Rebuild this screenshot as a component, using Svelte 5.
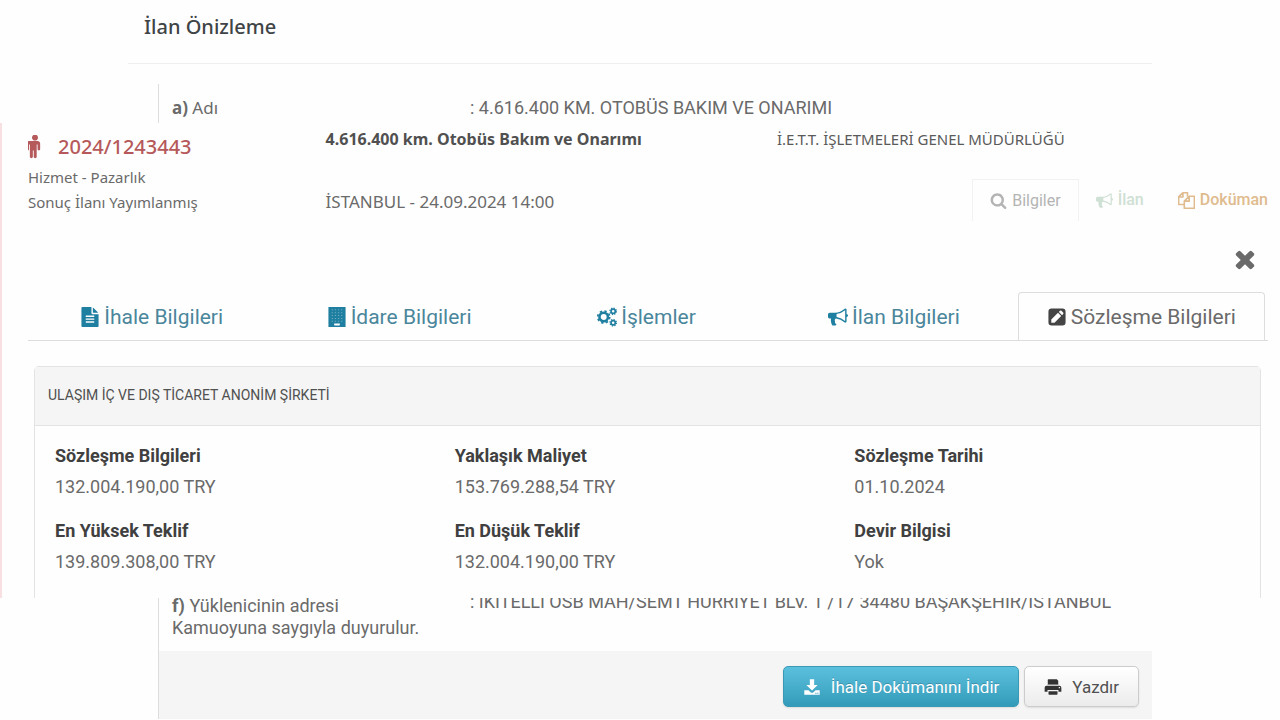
<script lang="ts">
	type IconName =
		| 'male' | 'search' | 'bullhorn' | 'copy' | 'close' | 'file'
		| 'building' | 'cogs' | 'edit' | 'download' | 'print';

	const tabs: { label: string; icon: IconName }[] = [
		{ label: 'İhale Bilgileri', icon: 'file' },
		{ label: 'İdare Bilgileri', icon: 'building' },
		{ label: 'İşlemler', icon: 'cogs' },
		{ label: 'İlan Bilgileri', icon: 'bullhorn' },
		{ label: 'Sözleşme Bilgileri', icon: 'edit' }
	];

	const contract = [
		{ label: 'Sözleşme Bilgileri', value: '132.004.190,00 TRY' },
		{ label: 'Yaklaşık Maliyet', value: '153.769.288,54 TRY' },
		{ label: 'Sözleşme Tarihi', value: '01.10.2024' },
		{ label: 'En Yüksek Teklif', value: '139.809.308,00 TRY' },
		{ label: 'En Düşük Teklif', value: '132.004.190,00 TRY' },
		{ label: 'Devir Bilgisi', value: 'Yok' }
	];

	let activeTab = $state(4);
</script>

{#snippet icon(name: IconName)}
	<svg
		class="icon icon-{name}"
		viewBox={name === 'male' ? '384 0 1024 1792' : '0 0 1792 1792'}
		fill="currentColor"
		aria-hidden="true"
	>
		{#if name === 'male'}
			<path d="M1280 640v416q0 40-28 68t-68 28-68-28-28-68v-352h-64v912q0 46-33 79t-79 33-79-33-33-79v-464h-64v464q0 46-33 79t-79 33-79-33-33-79v-912h-64v352q0 40-28 68t-68 28-68-28-28-68v-416q0-80 56-136t136-56h640q80 0 136 56t56 136zm-160-448q0 93-65.5 158.5t-158.5 65.5-158.5-65.5-65.5-158.5 65.5-158.5 158.5-65.5 158.5 65.5 65.5 158.5z" />
		{:else if name === 'search'}
			<path d="M1216 832q0-185-131.5-316.5t-316.5-131.5-316.5 131.5-131.5 316.5 131.5 316.5 316.5 131.5 316.5-131.5 131.5-316.5zm512 832q0 52-38 90t-90 38q-54 0-90-38l-343-342q-179 124-399 124-143 0-273.5-55.5t-225-150-150-225-55.5-273.5 55.5-273.5 150-225 225-150 273.5-55.5 273.5 55.5 225 150 150 225 55.5 273.5q0 220-124 399l343 343q37 37 37 90z" />
		{:else if name === 'bullhorn'}
			<path d="M1664 640q53 0 90.5 37.5t37.5 90.5-37.5 90.5-90.5 37.5v384q0 52-38 90t-90 38q-417-347-812-380-58 19-91 66t-31 100.5 40 92.5q-20 33-23 65.5t6 58 33.5 55 48 50 61.5 50.5q-29 58-111.5 83t-168.5 11.5-132-55.5q-7-23-29.5-87.5t-32-94.5-23-89-15-101 3.5-98.5 22-110.5h-122q-66 0-113-47t-47-113v-192q0-66 47-113t113-47h480q435 0 896-384 52 0 90 38t38 90v384zm-128 604v-954q-394 302-768 343v270q377 42 768 341z" />
		{:else if name === 'copy'}
			<path d="M520 64h480v420M520 64 64 520v800h600M520 64v456H64M1180 448h548v1280H664V964zM1180 448v516H664" fill="none" stroke="currentColor" stroke-width="170" stroke-linejoin="round" />
		{:else if name === 'close'}
			<path d="M1490 1322q0 40-28 68l-136 136q-28 28-68 28t-68-28l-294-294-294 294q-28 28-68 28t-68-28l-136-136q-28-28-28-68t28-68l294-294-294-294q-28-28-28-68t28-68l136-136q28-28 68-28t68 28l294 294 294-294q28-28 68-28t68 28l136 136q28 28 28 68t-28 68l-294 294 294 294q28 28 28 68z" />
		{:else if name === 'file'}
			<path d="M1596 476q14 14 28 36h-472v-472q22 14 36 28zm-476 164h544v1056q0 40-28 68t-68 28h-1344q-40 0-68-28t-28-68v-1600q0-40 28-68t68-28h800v544q0 40 28 68t68 28zm160 736v-64q0-14-9-23t-23-9h-704q-14 0-23 9t-9 23v64q0 14 9 23t23 9h704q14 0 23-9t9-23zm0-256v-64q0-14-9-23t-23-9h-704q-14 0-23 9t-9 23v64q0 14 9 23t23 9h704q14 0 23-9t9-23zm0-256v-64q0-14-9-23t-23-9h-704q-14 0-23 9t-9 23v64q0 14 9 23t23 9h704q14 0 23-9t9-23z" />
		{:else if name === 'building'}
			<path fill-rule="evenodd" d="M128 0h1536v1792H128zM640 1472v128q0 64 64 64h384q64 0 64-64v-128z" />
			<path d="M420 256h952M420 512h952M420 768h952M420 1024h952M420 1280h952" fill="none" stroke="#fff" stroke-opacity="0.35" stroke-width="90" stroke-dasharray="110 170" />
		{:else if name === 'cogs'}
			<g fill="none" stroke="currentColor">
				<circle cx="600" cy="896" r="380" stroke-width="230" />
				<circle cx="600" cy="896" r="540" stroke-width="150" stroke-dasharray="212 212" />
				<circle cx="1450" cy="384" r="190" stroke-width="150" />
				<circle cx="1450" cy="384" r="290" stroke-width="110" stroke-dasharray="114 114" />
				<circle cx="1450" cy="1408" r="190" stroke-width="150" />
				<circle cx="1450" cy="1408" r="290" stroke-width="110" stroke-dasharray="114 114" />
			</g>
		{:else if name === 'edit'}
			<path fill-rule="evenodd" d="M416 128h960q288 0 288 288v960q0 288-288 288H416q-288 0-288-288V416q0-288 288-288zM384 1408h288l600-600-288-288-600 600zM1062 442l288 288 96-96q68-68 0-136l-152-152q-68-68-136 0z" />
		{:else if name === 'download'}
			<path d="M680 128h432v560h350L896 1254 330 688h350z" />
			<path fill-rule="evenodd" d="M128 1216h420l200 200q148 120 296 0l200-200h420v448H128zM1216 1472h128v96h-128zm192 0h128v96h-128z" />
		{:else}
			<path d="M448 128h820l148 148v440H376V200q0-72 72-72z" />
			<path fill-rule="evenodd" d="M256 768h1280q192 0 192 192v416h-288v-192H352v192H64V960q0-192 192-192zM1472 896h128v128h-128z" />
			<path d="M448 1312h896v288q0 64-64 64H512q-64 0-64-64z" />
			<path d="M376 660h1040v80H376z" fill="#fff" />
		{/if}
	</svg>
{/snippet}

<main class="page">
	<section class="notice">
		<h1 class="notice-title">İlan Önizleme</h1>
		<div class="notice-body notice-top">
			<div class="notice-row">
				<span class="segoe"><b>a)</b> Adı</span>
				<span class="value">: 4.616.400 KM. OTOBÜS BAKIM VE ONARIMI</span>
			</div>
		</div>
	</section>

	<section class="tender">
		<div class="summary">
			<div class="summary-id">
				<div class="tender-no">{@render icon('male')}<span>2024/1243443</span></div>
				<div>Hizmet - Pazarlık</div>
				<div>Sonuç İlanı Yayımlanmış</div>
			</div>
			<div class="summary-job">
				<strong>4.616.400 km. Otobüs Bakım ve Onarımı</strong>
				<span class="place">İSTANBUL - 24.09.2024 14:00</span>
			</div>
			<div class="summary-authority">
				<span class="authority">İ.E.T.T. İŞLETMELERİ GENEL MÜDÜRLÜĞÜ</span>
				<div class="actions">
					<button class="action action-info">{@render icon('search')}Bilgiler</button>
					<button class="action action-notice">{@render icon('bullhorn')}İlan</button>
					<button class="action action-doc">{@render icon('copy')}Doküman</button>
				</div>
			</div>
		</div>

		<div class="close-row">
			<button class="close" aria-label="Kapat">{@render icon('close')}</button>
		</div>

		<nav class="tabs">
			{#each tabs as tab, i}
				<button class="tab" class:active={activeTab === i} onclick={() => (activeTab = i)}>
					{@render icon(tab.icon)}{tab.label}
				</button>
			{/each}
		</nav>

		<div class="panel">
			<h2 class="panel-head">ULAŞIM İÇ VE DIŞ TİCARET ANONİM ŞİRKETİ</h2>
			<dl class="panel-body">
				{#each contract as item}
					<div>
						<dt>{item.label}</dt>
						<dd>{item.value}</dd>
					</div>
				{/each}
			</dl>
		</div>
	</section>

	<section class="notice">
		<div class="notice-body">
			<!-- this row runs on underneath the tender panel -->
			<div class="notice-row tucked">
				<span><b>f)</b> Yüklenicinin adresi</span>
				<span class="value">: İKİTELLİ OSB MAH/SEMT HÜRRİYET BLV. 1 /17 34480 BAŞAKŞEHİR/İSTANBUL</span>
			</div>
			<p class="closing">Kamuoyuna saygıyla duyurulur.</p>
			<footer class="notice-footer">
				<button class="btn btn-primary">{@render icon('download')}İhale Dokümanını İndir</button>
				<button class="btn">{@render icon('print')}Yazdır</button>
			</footer>
		</div>
	</section>
</main>

<style>
:global(body) { background: #fefefe; }

.page {
	font-family: Roboto, "Liberation Sans", sans-serif;
	font-size: 17px;
	line-height: 22px;
	color: #6a6a6a;
	overflow: hidden;
}

button {
	font: inherit;
	color: inherit;
	background: none;
	border: 0;
	padding: 0;
	cursor: pointer;
}

.icon { width: 20px; height: 20px; flex-shrink: 0; }

/* Announcement preview */
.notice { margin: 0 10%; }

.notice-title {
	margin: 0;
	padding: 12px 16px 21px;
	border-bottom: 1px solid #eee;
	font-family: "Noto Sans", sans-serif;
	font-size: 20px;
	font-weight: 500;
	line-height: 30px;
	color: #3f4446;
}

.notice-body {
	margin-left: 30px;
	border-left: 1px solid #ddd;
	font-size: 18px;
}
.notice-top { margin-top: 20px; padding: 13px 0 4px; }
.notice-row { display: grid; grid-template-columns: 30% 1fr; padding-left: 13px; }
.segoe { font-family: "Noto Sans", sans-serif; font-size: 17px; }
.value { padding-left: 4px; }

/* Tender record */
.tender {
	position: relative;
	background: #fefefe;
	border-left: 2px solid #f8dfe1;
	padding: 0 12px 0 26px;
}

.summary {
	display: grid;
	grid-template-columns: 24% 1fr 40%;
	font-family: "Noto Sans", sans-serif;
	font-size: 15px;
	line-height: 22px;
	padding-top: 5px;
}
.summary-id { padding-top: 6px; line-height: 25px; }

.tender-no {
	display: flex;
	align-items: center;
	gap: 16px;
	margin-bottom: 5px;
	font-size: 20px;
	font-weight: 500;
	line-height: 26px;
	color: #b5595a;
}
.icon-male { width: 14px; height: 24px; }

.summary-job { display: flex; flex-direction: column; gap: 41px; }
.summary-job strong { font-size: 16px; font-weight: 700; color: #505050; }
.place { font-size: 17px; }

.summary-authority { display: flex; flex-direction: column; gap: 29px; }
.authority { padding-left: 5px; color: #5a5a5a; }

.actions {
	display: flex;
	justify-content: flex-end;
	font-family: Roboto, "Liberation Sans", sans-serif;
	font-size: 16px;
}
.actions .icon { width: 17px; height: 17px; }
.action {
	display: flex;
	align-items: center;
	gap: 5px;
	height: 42px;
	padding: 0 17px;
}
.action-info { border: 1px solid #f2f2f2; border-bottom: 0; color: #b4b4b4; }
.action-notice { color: #cfe0d4; font-weight: 500; }
.action-doc { padding-right: 0; color: #dfbb8e; font-weight: 500; }

.close-row { display: flex; justify-content: flex-end; padding: 24px 9px 19px; }
.close { color: #6a6a6a; }
.close .icon { width: 28px; height: 28px; display: block; }

.tabs {
	display: grid;
	grid-template-columns: repeat(5, 1fr);
	padding-right: 3px;
	border-bottom: 1px solid #ddd;
}
.tab {
	display: flex;
	align-items: center;
	justify-content: center;
	gap: 4px;
	height: 48px;
	border: 1px solid transparent;
	border-bottom: 0;
	font-size: 21px;
	color: #4a869b;
}
.tab .icon { color: #1f7fa1; }
.tab.active {
	margin-bottom: -1px;
	border-color: #ddd;
	border-radius: 4px 4px 0 0;
	background: #fefefe;
	color: #6a6a6a;
}
.tab.active .icon { color: #444; }

.panel {
	margin: 25px 7px 0 6px;
	border: 1px solid #e3e3e3;
	border-bottom: 0;
	border-radius: 5px 5px 0 0;
}
.panel-head {
	margin: 0;
	padding: 17px 13px 19px;
	background: #f5f5f5;
	border-bottom: 1px solid #e3e3e3;
	font-size: 14px;
	font-weight: 400;
	color: #505050;
}
.panel-body {
	display: grid;
	grid-template-columns: repeat(3, 1fr);
	gap: 13px 0;
	margin: 0;
	padding: 14px 6px 21px 20px;
	font-size: 18px;
	line-height: 31px;
}
.panel-body dt { font-weight: 700; color: #404040; }
.panel-body dd { margin: 0; }

/* Announcement end */
.tucked { margin-top: -3px; }
.tucked .value { line-height: 14px; }
.closing { margin: 0; padding: 0 13px 12px; }

.notice-footer {
	display: flex;
	justify-content: flex-end;
	gap: 5px;
	padding: 15px 13px 12px 0;
	background: #f5f5f5;
	font-size: 17px;
}
.btn {
	display: flex;
	align-items: center;
	gap: 10px;
	height: 41px;
	padding: 0 19px;
	border: 1px solid #ccc;
	border-radius: 5px;
	background: linear-gradient(#fff, #ececec);
	box-shadow: 0 1px 2px rgba(0, 0, 0, 0.1);
	color: #505050;
}
.btn .icon { width: 18px; height: 18px; }
.icon-print { color: #333; }
.btn-primary {
	border-color: #3a9ab5;
	background: linear-gradient(#5bc0de, #339bb9);
	color: #fff;
	text-shadow: 0 -1px 0 rgba(0, 0, 0, 0.2);
}
</style>
